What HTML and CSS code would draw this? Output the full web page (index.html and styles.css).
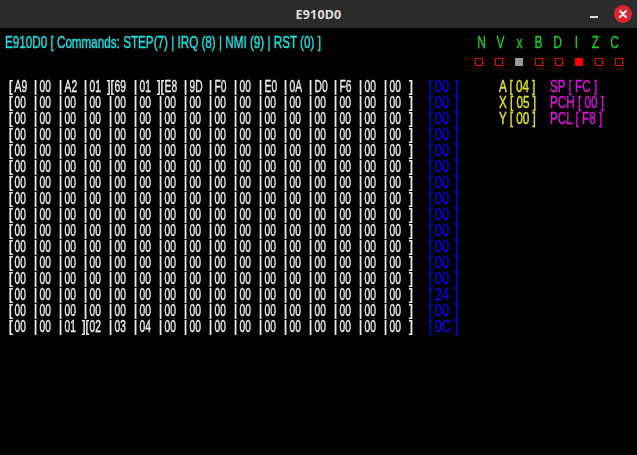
FILE: index.html
```html
<!DOCTYPE html>
<html>
<head>
<meta charset="utf-8">
<title>E910D0</title>
<link rel="stylesheet" href="styles.css">
</head>
<body>
<div class="window">
  <div class="titlebar">
    <span class="title">E910D0</span>
    <div class="controls">
      <span class="min"></span>
      <span class="close"><svg width="18" height="18" viewBox="0 0 18 18"><path d="M6 6 L12 12 M12 6 L6 12" stroke="#fff" stroke-width="2" stroke-linecap="round"/></svg></span>
    </div>
  </div>
  <div class="content">
    <div class="top">
      <div class="cmd">E910D0 [ Commands: STEP(7) | IRQ (8) | NMI (9) | RST (0) ]</div>
      <div class="flags">
        <div class="letters"><span>N</span><span>V</span><span>x</span><span>B</span><span>D</span><span>I</span><span>Z</span><span>C</span></div>
        <div class="boxes"><span class="box"></span><span class="box"></span><span class="box gray"></span><span class="box"></span><span class="box"></span><span class="box on"></span><span class="box"></span><span class="box"></span></div>
      </div>
    </div>
    <div class="main">
      <div class="mem">
        <div class="row"><span>[</span><span>A9</span><span>|</span><span>00</span><span>|</span><span>A2</span><span>|</span><span>01</span><span class="j">][</span><span>69</span><span>|</span><span>01</span><span class="j">][</span><span>E8</span><span>|</span><span>9D</span><span>|</span><span>F0</span><span>|</span><span>00</span><span>|</span><span>E0</span><span>|</span><span>0A</span><span>|</span><span>D0</span><span>|</span><span>F6</span><span>|</span><span>00</span><span>|</span><span>00</span><span>]</span></div>
        <div class="row"><span>[</span><span>00</span><span>|</span><span>00</span><span>|</span><span>00</span><span>|</span><span>00</span><span>|</span><span>00</span><span>|</span><span>00</span><span>|</span><span>00</span><span>|</span><span>00</span><span>|</span><span>00</span><span>|</span><span>00</span><span>|</span><span>00</span><span>|</span><span>00</span><span>|</span><span>00</span><span>|</span><span>00</span><span>|</span><span>00</span><span>|</span><span>00</span><span>]</span></div>
        <div class="row"><span>[</span><span>00</span><span>|</span><span>00</span><span>|</span><span>00</span><span>|</span><span>00</span><span>|</span><span>00</span><span>|</span><span>00</span><span>|</span><span>00</span><span>|</span><span>00</span><span>|</span><span>00</span><span>|</span><span>00</span><span>|</span><span>00</span><span>|</span><span>00</span><span>|</span><span>00</span><span>|</span><span>00</span><span>|</span><span>00</span><span>|</span><span>00</span><span>]</span></div>
        <div class="row"><span>[</span><span>00</span><span>|</span><span>00</span><span>|</span><span>00</span><span>|</span><span>00</span><span>|</span><span>00</span><span>|</span><span>00</span><span>|</span><span>00</span><span>|</span><span>00</span><span>|</span><span>00</span><span>|</span><span>00</span><span>|</span><span>00</span><span>|</span><span>00</span><span>|</span><span>00</span><span>|</span><span>00</span><span>|</span><span>00</span><span>|</span><span>00</span><span>]</span></div>
        <div class="row"><span>[</span><span>00</span><span>|</span><span>00</span><span>|</span><span>00</span><span>|</span><span>00</span><span>|</span><span>00</span><span>|</span><span>00</span><span>|</span><span>00</span><span>|</span><span>00</span><span>|</span><span>00</span><span>|</span><span>00</span><span>|</span><span>00</span><span>|</span><span>00</span><span>|</span><span>00</span><span>|</span><span>00</span><span>|</span><span>00</span><span>|</span><span>00</span><span>]</span></div>
        <div class="row"><span>[</span><span>00</span><span>|</span><span>00</span><span>|</span><span>00</span><span>|</span><span>00</span><span>|</span><span>00</span><span>|</span><span>00</span><span>|</span><span>00</span><span>|</span><span>00</span><span>|</span><span>00</span><span>|</span><span>00</span><span>|</span><span>00</span><span>|</span><span>00</span><span>|</span><span>00</span><span>|</span><span>00</span><span>|</span><span>00</span><span>|</span><span>00</span><span>]</span></div>
        <div class="row"><span>[</span><span>00</span><span>|</span><span>00</span><span>|</span><span>00</span><span>|</span><span>00</span><span>|</span><span>00</span><span>|</span><span>00</span><span>|</span><span>00</span><span>|</span><span>00</span><span>|</span><span>00</span><span>|</span><span>00</span><span>|</span><span>00</span><span>|</span><span>00</span><span>|</span><span>00</span><span>|</span><span>00</span><span>|</span><span>00</span><span>|</span><span>00</span><span>]</span></div>
        <div class="row"><span>[</span><span>00</span><span>|</span><span>00</span><span>|</span><span>00</span><span>|</span><span>00</span><span>|</span><span>00</span><span>|</span><span>00</span><span>|</span><span>00</span><span>|</span><span>00</span><span>|</span><span>00</span><span>|</span><span>00</span><span>|</span><span>00</span><span>|</span><span>00</span><span>|</span><span>00</span><span>|</span><span>00</span><span>|</span><span>00</span><span>|</span><span>00</span><span>]</span></div>
        <div class="row"><span>[</span><span>00</span><span>|</span><span>00</span><span>|</span><span>00</span><span>|</span><span>00</span><span>|</span><span>00</span><span>|</span><span>00</span><span>|</span><span>00</span><span>|</span><span>00</span><span>|</span><span>00</span><span>|</span><span>00</span><span>|</span><span>00</span><span>|</span><span>00</span><span>|</span><span>00</span><span>|</span><span>00</span><span>|</span><span>00</span><span>|</span><span>00</span><span>]</span></div>
        <div class="row"><span>[</span><span>00</span><span>|</span><span>00</span><span>|</span><span>00</span><span>|</span><span>00</span><span>|</span><span>00</span><span>|</span><span>00</span><span>|</span><span>00</span><span>|</span><span>00</span><span>|</span><span>00</span><span>|</span><span>00</span><span>|</span><span>00</span><span>|</span><span>00</span><span>|</span><span>00</span><span>|</span><span>00</span><span>|</span><span>00</span><span>|</span><span>00</span><span>]</span></div>
        <div class="row"><span>[</span><span>00</span><span>|</span><span>00</span><span>|</span><span>00</span><span>|</span><span>00</span><span>|</span><span>00</span><span>|</span><span>00</span><span>|</span><span>00</span><span>|</span><span>00</span><span>|</span><span>00</span><span>|</span><span>00</span><span>|</span><span>00</span><span>|</span><span>00</span><span>|</span><span>00</span><span>|</span><span>00</span><span>|</span><span>00</span><span>|</span><span>00</span><span>]</span></div>
        <div class="row"><span>[</span><span>00</span><span>|</span><span>00</span><span>|</span><span>00</span><span>|</span><span>00</span><span>|</span><span>00</span><span>|</span><span>00</span><span>|</span><span>00</span><span>|</span><span>00</span><span>|</span><span>00</span><span>|</span><span>00</span><span>|</span><span>00</span><span>|</span><span>00</span><span>|</span><span>00</span><span>|</span><span>00</span><span>|</span><span>00</span><span>|</span><span>00</span><span>]</span></div>
        <div class="row"><span>[</span><span>00</span><span>|</span><span>00</span><span>|</span><span>00</span><span>|</span><span>00</span><span>|</span><span>00</span><span>|</span><span>00</span><span>|</span><span>00</span><span>|</span><span>00</span><span>|</span><span>00</span><span>|</span><span>00</span><span>|</span><span>00</span><span>|</span><span>00</span><span>|</span><span>00</span><span>|</span><span>00</span><span>|</span><span>00</span><span>|</span><span>00</span><span>]</span></div>
        <div class="row"><span>[</span><span>00</span><span>|</span><span>00</span><span>|</span><span>00</span><span>|</span><span>00</span><span>|</span><span>00</span><span>|</span><span>00</span><span>|</span><span>00</span><span>|</span><span>00</span><span>|</span><span>00</span><span>|</span><span>00</span><span>|</span><span>00</span><span>|</span><span>00</span><span>|</span><span>00</span><span>|</span><span>00</span><span>|</span><span>00</span><span>|</span><span>00</span><span>]</span></div>
        <div class="row"><span>[</span><span>00</span><span>|</span><span>00</span><span>|</span><span>00</span><span>|</span><span>00</span><span>|</span><span>00</span><span>|</span><span>00</span><span>|</span><span>00</span><span>|</span><span>00</span><span>|</span><span>00</span><span>|</span><span>00</span><span>|</span><span>00</span><span>|</span><span>00</span><span>|</span><span>00</span><span>|</span><span>00</span><span>|</span><span>00</span><span>|</span><span>00</span><span>]</span></div>
        <div class="row"><span>[</span><span>00</span><span>|</span><span>00</span><span>|</span><span>01</span><span class="j">][</span><span>02</span><span>|</span><span>03</span><span>|</span><span>04</span><span>|</span><span>00</span><span>|</span><span>00</span><span>|</span><span>00</span><span>|</span><span>00</span><span>|</span><span>00</span><span>|</span><span>00</span><span>|</span><span>00</span><span>|</span><span>00</span><span>|</span><span>00</span><span>|</span><span>00</span><span>]</span></div>
      </div>
      <div class="stack">
        <div class="srow"><span>[</span><span>00</span><span>]</span></div>
        <div class="srow"><span>[</span><span>00</span><span>]</span></div>
        <div class="srow"><span>[</span><span>00</span><span>]</span></div>
        <div class="srow"><span>[</span><span>00</span><span>]</span></div>
        <div class="srow"><span>[</span><span>00</span><span>]</span></div>
        <div class="srow"><span>[</span><span>00</span><span>]</span></div>
        <div class="srow"><span>[</span><span>00</span><span>]</span></div>
        <div class="srow"><span>[</span><span>00</span><span>]</span></div>
        <div class="srow"><span>[</span><span>00</span><span>]</span></div>
        <div class="srow"><span>[</span><span>00</span><span>]</span></div>
        <div class="srow"><span>[</span><span>00</span><span>]</span></div>
        <div class="srow"><span>[</span><span>00</span><span>]</span></div>
        <div class="srow"><span>[</span><span>00</span><span>]</span></div>
        <div class="srow"><span>[</span><span>24</span><span>]</span></div>
        <div class="srow"><span>[</span><span>00</span><span>]</span></div>
        <div class="srow"><span>[</span><span>0C</span><span>]</span></div>
      </div>
      <div class="regs">
        <div class="reg y">A [ 04 ]</div><div class="reg m">SP [ FC ]</div>
        <div class="reg y">X [ 05 ]</div><div class="reg m">PCH [ 00 ]</div>
        <div class="reg y">Y [ 00 ]</div><div class="reg m">PCL [ F8 ]</div>
      </div>
    </div>
  </div>
</div>
</body>
</html>
```

FILE: styles.css
```css
html, body {
  margin: 0;
  padding: 0;
  background: #000;
}
body {
  width: 637px;
  height: 455px;
  overflow: hidden;
  font-family: "Liberation Sans", Arial, sans-serif;
}
.window {
  display: flex;
  flex-direction: column;
  height: 455px;
}
.titlebar {
  height: 28px;
  background: #2c2c2c;
  display: flex;
  align-items: center;
  justify-content: center;
  position: relative;
  flex: none;
}
.title {
  font-family: "Noto Sans", "DejaVu Sans", sans-serif;
  font-weight: bold;
  font-size: 12.5px;
  color: #dedede;
  letter-spacing: 0.2px;
}
.controls {
  position: absolute;
  right: 5px;
  top: 5px;
  display: flex;
  align-items: center;
  gap: 16px;
}
.min {
  width: 8px;
  height: 2px;
  background: #e2e2e2;
  margin-top: 5px;
}
.close {
  width: 18px;
  height: 18px;
  border-radius: 50%;
  background: #e3232c;
  display: block;
}
.close svg { display: block; }

.content {
  flex: 1;
  background: #000;
}
.top {
  height: 51px;
  box-sizing: border-box;
  padding: 7px 8px 0 5px;
  display: flex;
  align-items: flex-start;
  will-change: transform;
}
.cmd {
  color: #18e2e2;
  font-size: 16px;
  line-height: 16px;
  white-space: pre;
  width: 317px;
  -webkit-text-stroke: 0.4px currentColor;
}
.cmd, .reg {
  transform: scaleX(0.73);
  transform-origin: 0 0;
}
.flags {
  margin-left: auto;
  width: 160px;
  display: flex;
  flex-direction: column;
  gap: 7px;
}
.letters {
  display: grid;
  grid-template-columns: repeat(8, 19px);
  padding-left: 3px;
  color: #1ccc1c;
  font-size: 16px;
  line-height: 16px;
  text-align: center;
  -webkit-text-stroke: 0.4px currentColor;
}
.letters > span {
  transform: scaleX(0.75);
}
.boxes {
  display: grid;
  grid-template-columns: repeat(8, 20px);
  justify-items: center;
}
.box {
  width: 8px;
  height: 8px;
  box-sizing: border-box;
  border: 1px solid #f00;
}
.box.gray {
  background: #9a9a9a;
  border-color: #9a9a9a;
}
.box.on {
  background: #f00;
}

.main {
  display: flex;
  align-items: flex-start;
  will-change: transform;
}
.mem {
  margin-left: 8px;
  color: #ececec;
  font-size: 16px;
  line-height: 16px;
}
.row {
  display: grid;
  grid-template-columns: repeat(16, 4px 21px) 4px;
  white-space: pre;
}
.row > span {
  padding-left: 1px;
  transform-origin: 0 0;
  transform: scaleX(0.8);
  font-weight: bold;
}
.row > span:nth-child(even) {
  padding-left: 4px;
  font-weight: normal;
  transform: scaleX(0.64);
  -webkit-text-stroke: 0.4px currentColor;
}
.row > .j {
  margin-left: -2px;
  transform: scaleX(0.7);
}
.stack {
  margin-left: 16px;
  color: #0606f0;
  font-size: 16px;
  line-height: 16px;
  -webkit-text-stroke: 0.4px currentColor;
}
.srow {
  display: grid;
  grid-template-columns: 6px 20px 4px;
}
.srow > span {
  transform-origin: 0 0;
  transform: scaleX(0.8);
  padding-left: 1px;
}
.regs {
  margin-left: 41px;
  display: grid;
  grid-template-columns: 51px 80px;
  font-size: 16px;
  line-height: 16px;
  white-space: pre;
  -webkit-text-stroke: 0.4px currentColor;
}
.reg.y { color: #e6e614; }
.reg.m { color: #e010e0; }
```
